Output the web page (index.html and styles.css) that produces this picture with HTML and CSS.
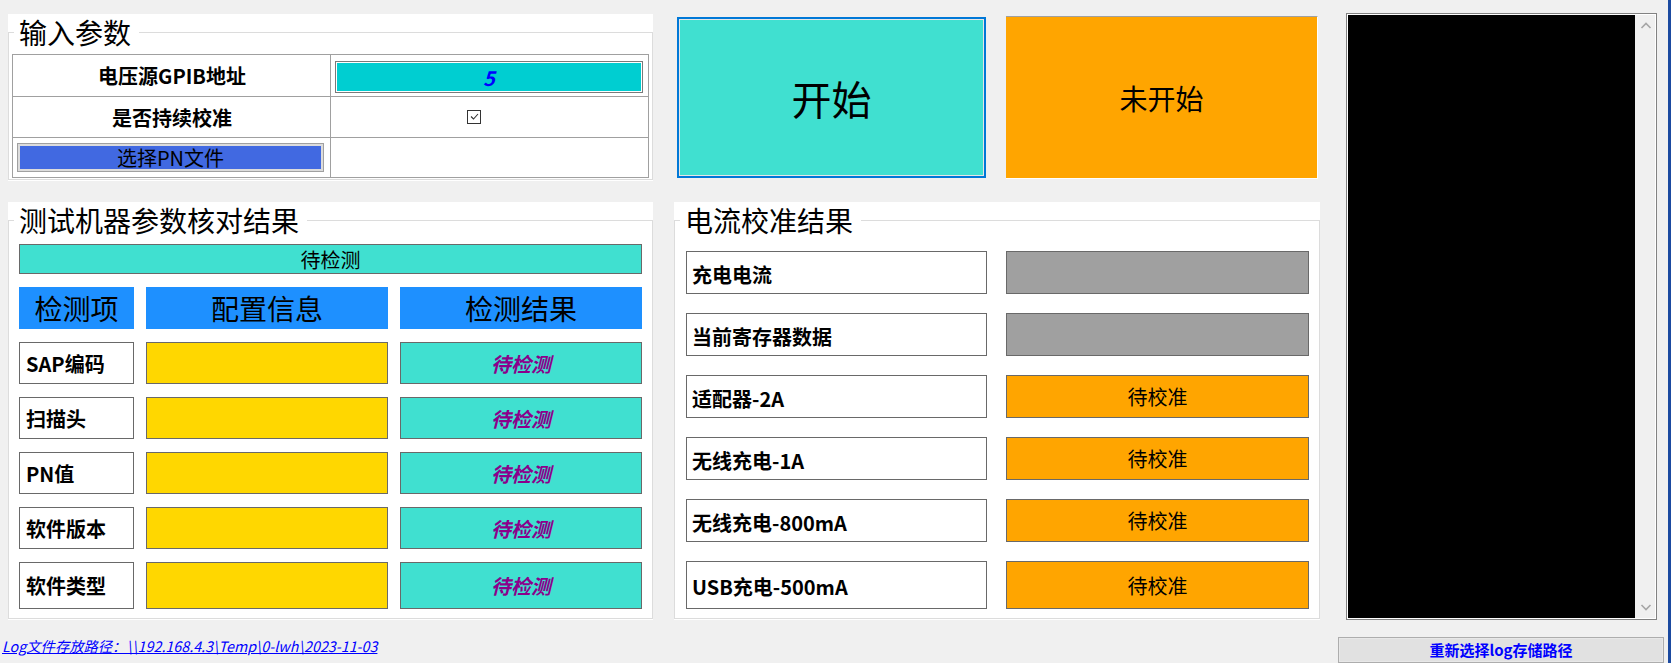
FILE: index.html
```html
<!DOCTYPE html>
<html lang="zh-CN">
<head>
<meta charset="utf-8">
<title>电流校准</title>
<link rel="stylesheet" href="styles.css">
</head>
<body>
<div class="window">
  <div class="main">
    <div class="main-grid">
      <section class="panel">
        <fieldset class="group">
          <legend class="group-title">输入参数</legend>
          <div class="param-table">
            <div class="cell label-cell">电压源GPIB地址</div>
            <div class="cell input-cell"><div class="textbox">5</div></div>
            <div class="cell label-cell">是否持续校准</div>
            <div class="cell check-cell">
              <span class="checkbox"><svg width="11" height="11" viewBox="0 0 11 11"><polyline points="2,5.5 4.5,8 9,3" fill="none" stroke="#333" stroke-width="1.1"/></svg></span>
            </div>
            <div class="cell btn-cell"><button class="pn-btn">选择PN文件</button></div>
            <div class="cell"></div>
          </div>
        </fieldset>
      </section>

      <div class="action-bar">
        <button class="start-btn">开始</button>
        <div class="state-label">未开始</div>
      </div>

      <section class="panel">
        <fieldset class="group">
          <legend class="group-title">测试机器参数核对结果</legend>
          <div class="check-body">
            <div class="status-bar">待检测</div>
            <div class="check-grid">
              <div class="head">检测项</div>
              <div class="head">配置信息</div>
              <div class="head">检测结果</div>

              <div class="item">SAP编码</div>
              <div class="config"></div>
              <div class="result">待检测</div>

              <div class="item">扫描头</div>
              <div class="config"></div>
              <div class="result">待检测</div>

              <div class="item">PN值</div>
              <div class="config"></div>
              <div class="result">待检测</div>

              <div class="item">软件版本</div>
              <div class="config"></div>
              <div class="result">待检测</div>

              <div class="item">软件类型</div>
              <div class="config"></div>
              <div class="result">待检测</div>
            </div>
          </div>
        </fieldset>
      </section>

      <section class="panel">
        <fieldset class="group">
          <legend class="group-title">电流校准结果</legend>
          <div class="calib-body">
            <div class="calib-grid">
              <div class="calib-label">充电电流</div>
              <div class="calib-value gray"></div>
              <div class="calib-label">当前寄存器数据</div>
              <div class="calib-value gray"></div>
              <div class="calib-label">适配器-2A</div>
              <div class="calib-value orange">待校准</div>
              <div class="calib-label">无线充电-1A</div>
              <div class="calib-value orange">待校准</div>
              <div class="calib-label">无线充电-800mA</div>
              <div class="calib-value orange">待校准</div>
              <div class="calib-label">USB充电-500mA</div>
              <div class="calib-value orange">待校准</div>
            </div>
          </div>
        </fieldset>
      </section>
    </div>
    <a class="log-path" href="#">Log文件存放路径：\\192.168.4.3\Temp\0-lwh\2023-11-03</a>
  </div>

  <aside class="side">
    <div class="log-box">
      <div class="log-screen"></div>
      <div class="scrollbar">
        <svg width="12" height="7" viewBox="0 0 12 7"><polyline points="1.5,6 6,1.5 10.5,6" fill="none" stroke="#a6a6a6" stroke-width="1.6"/></svg>
        <svg width="12" height="7" viewBox="0 0 12 7"><polyline points="1.5,1 6,5.5 10.5,1" fill="none" stroke="#a6a6a6" stroke-width="1.6"/></svg>
      </div>
    </div>
    <button class="relocate-btn">重新选择log存储路径</button>
  </aside>

  <div class="frame-edge"></div>
</div>
</body>
</html>
```

FILE: styles.css
```css
* {
  box-sizing: border-box;
}

html, body {
  margin: 0;
  padding: 0;
}

body {
  width: 1671px;
  height: 663px;
  overflow: hidden;
  background: #f0f0f0;
  font-family: "Microsoft YaHei", "Noto Sans CJK SC", "Noto Sans", sans-serif;
  color: #000;
}

button {
  font-family: inherit;
  margin: 0;
  padding: 0;
  cursor: default;
}

.window {
  display: flex;
  width: 1671px;
  height: 663px;
}

/* ---------- main area ---------- */
.main {
  display: flex;
  flex-direction: column;
  padding: 14px 0 0 8px;
  width: 1320px;
}

.main-grid {
  display: grid;
  grid-template-columns: 645px 646px;
  grid-template-rows: 167px 418px;
  column-gap: 21px;
  row-gap: 21px;
}

.panel {
  background: #fff;
  padding-top: 1px;
}

.group {
  margin: 0;
  padding: 0 3px;
  border: 1px solid #dcdcdc;
  min-width: 0;
  height: calc(100% - 1px);
}

.group-title {
  margin-left: 2px;
  padding: 0 8px 0 5px;
  font-size: 28px;
  line-height: 34px;
  font-weight: 400;
}

/* ---------- input params ---------- */
.param-table {
  margin-top: 5px;
  display: grid;
  grid-template-columns: 317px 1fr;
  grid-template-rows: 41px 40px 39px;
  gap: 1px;
  padding: 1px;
  background: #a0a0a0;
}

.cell {
  background: #fff;
  display: flex;
  align-items: center;
}

.label-cell {
  justify-content: center;
  font-size: 20px;
  font-weight: 700;
  padding-left: 1px;
}

.input-cell {
  padding: 6px 5px 3px 4px;
  align-items: stretch;
}

.textbox {
  flex: 1;
  border: 1px solid #7a7a7a;
  box-shadow: inset 0 0 0 1px #fff;
  background: #00ced1;
  color: #0000ff;
  font-size: 20px;
  font-weight: 700;
  font-style: italic;
  display: flex;
  align-items: center;
  justify-content: center;
}

.check-cell {
  padding-left: 136px;
}

.checkbox {
  width: 14px;
  height: 14px;
  border: 1px solid #333;
  background: #fff;
  display: flex;
  align-items: center;
  justify-content: center;
  margin-top: -1px;
}

.btn-cell {
  padding: 5px 6px 5px 4px;
  align-items: stretch;
}

.pn-btn {
  flex: 1;
  border: 1px solid #a0a0a0;
  box-shadow: inset 0 0 0 2px #dcdcdc;
  background: #4169e1;
  color: #000;
  font-size: 20px;
  line-height: 24px;
}

/* ---------- action bar ---------- */
.action-bar {
  display: flex;
  align-items: flex-start;
  gap: 20px;
  padding: 2px 0 0 3px;
}

.start-btn {
  width: 309px;
  height: 161px;
  margin-top: 1px;
  border: 2px solid #0078d7;
  box-shadow: inset 0 0 0 1px #e6e6e6;
  background: #40e0d0;
  color: #000;
  font-size: 40px;
  line-height: 48px;
}

.state-label {
  width: 312px;
  height: 163px;
  background: #ffa500;
  border-top: 1px solid #a0a0a0;
  border-right: 1px solid #fff;
  border-bottom: 1px solid #fff;
  font-size: 28px;
  display: flex;
  align-items: center;
  justify-content: center;
}

/* ---------- check panel ---------- */
.check-body {
  padding: 7px 7px 0 7px;
}

.status-bar {
  height: 30px;
  border: 1px solid #696969;
  background: #40e0d0;
  font-size: 20px;
  display: flex;
  align-items: center;
  justify-content: center;
}

.check-grid {
  margin-top: 13px;
  display: grid;
  grid-template-columns: 115px 242px 242px;
  grid-template-rows: 42px 42px 42px 42px 42px 47px;
  column-gap: 12px;
  row-gap: 13px;
}

.head {
  background: #1e90ff;
  font-size: 28px;
  display: flex;
  align-items: center;
  justify-content: center;
}

.item {
  border: 1px solid #696969;
  background: #fff;
  font-size: 20px;
  font-weight: 700;
  display: flex;
  align-items: center;
  padding-left: 6px;
}

.config {
  border: 1px solid #696969;
  background: #ffd700;
}

.result {
  border: 1px solid #696969;
  background: #40e0d0;
  color: #8b008b;
  font-size: 20px;
  font-weight: 700;
  font-style: italic;
  display: flex;
  align-items: center;
  justify-content: center;
}

/* ---------- calibration panel ---------- */
.calib-body {
  padding: 14px 0 0 8px;
}

.calib-grid {
  display: grid;
  grid-template-columns: 301px 303px;
  grid-template-rows: 43px 43px 43px 43px 43px 48px;
  column-gap: 19px;
  row-gap: 19px;
}

.calib-label {
  border: 1px solid #696969;
  background: #fff;
  font-size: 20px;
  font-weight: 700;
  display: flex;
  align-items: center;
  padding: 3px 0 0 5px;
}

.calib-value {
  border: 1px solid #696969;
  font-size: 20px;
  display: flex;
  align-items: center;
  justify-content: center;
}

.calib-value.gray {
  background: #a0a0a0;
}

.calib-value.orange {
  background: #ffa500;
}

/* ---------- log path ---------- */
.log-path {
  margin: 17px 0 0 -6px;
  font-size: 14.3px;
  line-height: 18px;
  font-style: italic;
  color: #0000ff;
  text-decoration: underline;
  white-space: nowrap;
  align-self: flex-start;
}

/* ---------- side ---------- */
.side {
  width: 330px;
  margin-left: 18px;
  padding-top: 13px;
  display: flex;
  flex-direction: column;
}

.log-box {
  width: 311px;
  height: 609px;
  margin-left: 8px;
  border: 1px solid #828282;
  padding: 1px;
  background: #fff;
  display: flex;
}

.log-screen {
  flex: 1;
  background: #000;
}

.scrollbar {
  width: 20px;
  background: #f0f0f0;
  display: flex;
  flex-direction: column;
  align-items: center;
  justify-content: space-between;
  padding: 7px 0 7px 1px;
}

.scrollbar svg {
  display: block;
}

.relocate-btn {
  margin-top: 17px;
  width: 326px;
  height: 26px;
  flex: none;
  border: 1px solid #adadad;
  box-shadow: inset 0 0 0 1px #e8e8e8;
  background: #e1e1e1;
  color: #0000ff;
  font-size: 15px;
  font-weight: 700;
  line-height: 20px;
}

.frame-edge {
  width: 3px;
  background: #1b4aa0;
}
```
